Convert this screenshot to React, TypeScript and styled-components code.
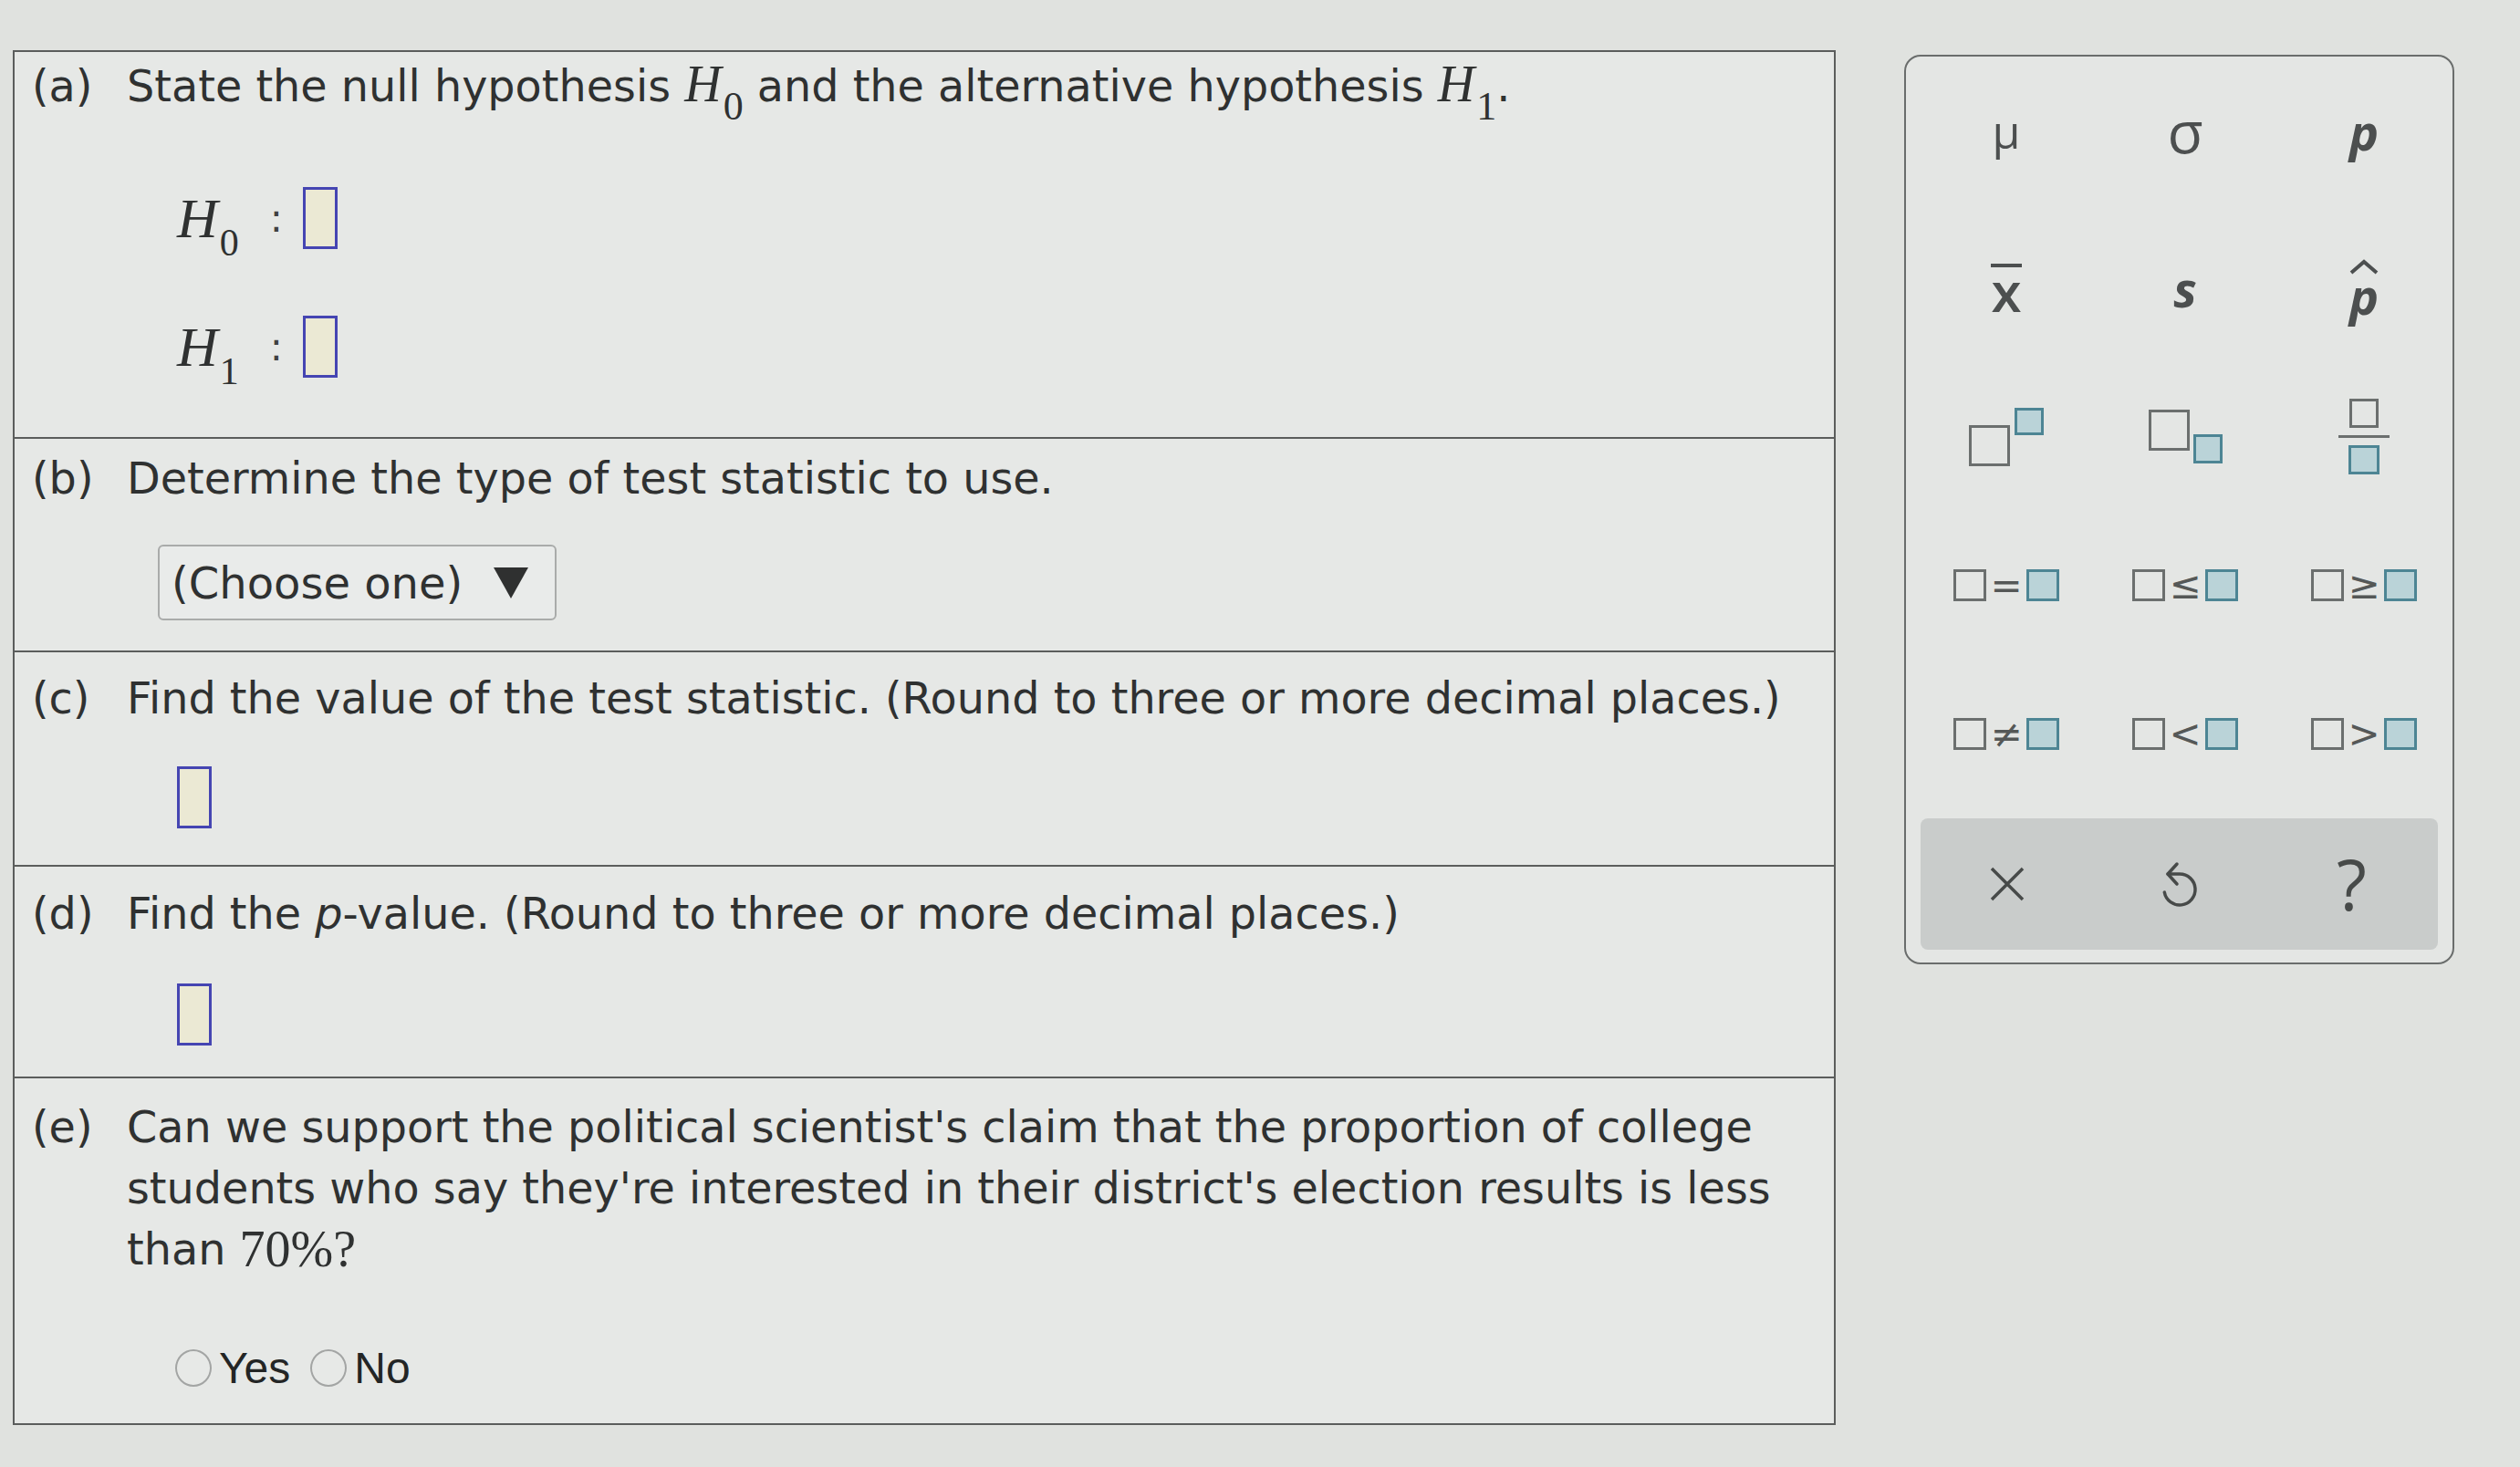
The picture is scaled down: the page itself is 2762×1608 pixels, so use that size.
import styled, { createGlobalStyle } from "styled-components";

const GlobalStyle = createGlobalStyle`
  html, body {
    margin: 0;
    padding: 0;
  }
  body {
    background: #e0e2df;
    font-family: "DejaVu Sans", Verdana, sans-serif;
    color: #2f3131;
  }
`;

const Page = styled.div`
  display: flex;
  align-items: flex-start;
  width: 2762px;
  height: 1608px;
  padding: 55px 0 0 14px;
  box-sizing: border-box;
  overflow: hidden;
`;

const QuestionTable = styled.div`
  width: 1998px;
  border: 2px solid #5b5d5c;
  background: #e6e8e6;
  box-sizing: border-box;
`;

const Part = styled.section<{ $h: number; $pt: number }>`
  display: flex;
  height: ${(p) => p.$h}px;
  padding: ${(p) => p.$pt}px 20px 0 19px;
  box-sizing: border-box;

  & + & {
    border-top: 2px solid #5b5d5c;
  }
`;

const Label = styled.div`
  flex: none;
  width: 104px;
  font-size: 47.7px;
  line-height: 67px;
`;

const Body = styled.div`
  flex: 1;
  min-width: 0;
`;

const Prompt = styled.p<{ $wrap?: number }>`
  margin: 0;
  font-size: 47.7px;
  line-height: 67px;
  max-width: ${(p) => (p.$wrap ? `${p.$wrap}px` : "none")};
`;

const MathVar = styled.span<{ $size: number }>`
  font-family: "Liberation Serif", "Times New Roman", serif;
  font-style: italic;
  font-size: ${(p) => p.$size}px;
  line-height: 1;
  white-space: nowrap;
`;

const Percent = styled.span`
  display: inline-block;
  font-family: "Liberation Serif", "Times New Roman", serif;
  font-size: 56px;
  line-height: 67px;
  vertical-align: top;
`;

const Sub = styled.span<{ $size: number; $drop: number }>`
  font-style: normal;
  font-size: ${(p) => p.$size}px;
  position: relative;
  top: ${(p) => p.$drop}px;
  margin-left: 2px;
`;

const HypList = styled.div`
  display: flex;
  flex-direction: column;
  gap: 71px;
  margin: 76px 0 0 55px;
`;

const HypRow = styled.div`
  display: flex;
  align-items: center;
  height: 70px;
`;

const Colon = styled.span`
  font-size: 42px;
  margin: 0 22px 0 34px;
  color: #3f4141;
`;

const AnswerBox = styled.span<{ $mt?: number; $ml?: number }>`
  display: block;
  width: 38px;
  height: 68px;
  margin: ${(p) => p.$mt ?? 0}px 0 0 ${(p) => p.$ml ?? 0}px;
  border: 3px solid #4545b2;
  background: #ebe9d4;
  box-sizing: border-box;
`;

const Select = styled.div`
  display: inline-flex;
  align-items: center;
  gap: 34px;
  width: 437px;
  height: 83px;
  margin: 39px 0 0 34px;
  padding-left: 13px;
  border: 2px solid #a9abaa;
  border-radius: 6px;
  background: #e9ebea;
  box-sizing: border-box;
  font-size: 48px;
  color: #2f3131;
`;

const Caret = styled.span`
  width: 0;
  height: 0;
  border-left: 19px solid transparent;
  border-right: 19px solid transparent;
  border-top: 34px solid #2f3030;
`;

const RadioGroup = styled.div`
  display: flex;
  align-items: center;
  height: 50px;
  margin: 71px 0 0 53px;
  font-family: "Liberation Sans", Arial, sans-serif;
  font-size: 48px;
  color: #232525;
`;

const RadioOption = styled.label`
  display: flex;
  align-items: center;
  gap: 8px;
  margin-right: 22px;
`;

const RadioDot = styled.span`
  width: 40px;
  height: 41px;
  border-radius: 50%;
  border: 2px solid #a3a5a4;
  background: #e7e9e7;
  box-sizing: border-box;
`;

/* keypad */

const Keypad = styled.aside`
  display: flex;
  flex-direction: column;
  width: 603px;
  height: 997px;
  margin: 5px 0 0 75px;
  padding: 9px 16px 0;
  border: 2px solid #6a6d6c;
  border-radius: 18px;
  background: #e4e6e4;
  box-sizing: border-box;
`;

const KeyGrid = styled.div`
  display: grid;
  grid-template-columns: repeat(3, 196px);
  grid-auto-rows: 163px;
  margin-left: -4px;
`;

const Key = styled.div<{ $italic?: boolean; $size?: number; $lift?: number }>`
  display: flex;
  align-items: center;
  justify-content: center;
  padding-bottom: ${(p) => (p.$lift ?? 0) * 2}px;
  font-family: "Open Sans", "DejaVu Sans", sans-serif;
  font-size: ${(p) => p.$size ?? 50}px;
  font-style: ${(p) => (p.$italic ? "italic" : "normal")};
  font-weight: ${(p) => (p.$italic ? 700 : 500)};
  color: #4c4f4f;
`;

const Bar = styled.span`
  display: inline-block;
  border-top: 4px solid #4c4f4f;
  font-size: 60px;
  font-weight: 600;
  line-height: 0.8;
  padding-top: 2px;
`;

const Hatted = styled.span`
  display: inline-flex;
  flex-direction: column;
  align-items: center;
  gap: 2px;
  font-size: 54px;
  line-height: 0.8;
`;

const Slot = styled.span<{ $w: number; $h: number; $filled?: boolean; $mt?: number }>`
  display: block;
  width: ${(p) => p.$w}px;
  height: ${(p) => p.$h}px;
  margin-top: ${(p) => p.$mt ?? 0}px;
  border: 3px solid ${(p) => (p.$filled ? "#4d8594" : "#6b6f6e")};
  background: ${(p) => (p.$filled ? "#bad3d8" : "transparent")};
  box-sizing: border-box;
`;

const Pair = styled.span<{ $gap: number }>`
  display: flex;
  align-items: flex-start;
  gap: ${(p) => p.$gap}px;
`;

const Fraction = styled.span`
  display: flex;
  flex-direction: column;
  align-items: center;
  gap: 8px;
`;

const FracLine = styled.span`
  width: 56px;
  height: 3px;
  background: #6b6f6e;
`;

const Relation = styled.span`
  display: flex;
  align-items: center;
  gap: 4px;
`;

const RelSign = styled.span`
  font-family: "DejaVu Sans", sans-serif;
  font-size: 42px;
  line-height: 1;
  color: #555857;
`;

const ActionBar = styled.div`
  display: grid;
  grid-template-columns: repeat(3, 1fr);
  align-items: center;
  height: 144px;
  margin-top: 11px;
  border-radius: 8px;
  background: #c9cccb;
`;

const Action = styled.div`
  display: flex;
  justify-content: center;
  align-items: center;
  color: #474a49;
`;

const Help = styled.span`
  font-family: "Open Sans", sans-serif;
  font-weight: 400;
  font-size: 76px;
  line-height: 1;
`;

const Rel = ({ sign }: { sign: string }) => (
  <Relation>
    <Slot $w={36} $h={35} />
    <RelSign>{sign}</RelSign>
    <Slot $w={36} $h={35} $filled />
  </Relation>
);

const H = ({ n, size, sub, drop }: { n: string; size: number; sub: number; drop: number }) => (
  <MathVar $size={size}>
    H<Sub $size={sub} $drop={drop}>{n}</Sub>
  </MathVar>
);

export default function App() {
  return (
    <>
      <GlobalStyle />
      <Page>
        <QuestionTable>
          <Part $h={422} $pt={4}>
            <Label>(a)</Label>
            <Body>
              <Prompt>
                State the null hypothesis <H n="0" size={56} sub={44} drop={20} /> and the alternative
                hypothesis <H n="1" size={56} sub={44} drop={20} />.
              </Prompt>
              <HypList>
                <HypRow>
                  <H n="0" size={62} sub={42} drop={20} />
                  <Colon>:</Colon>
                  <AnswerBox />
                </HypRow>
                <HypRow>
                  <H n="1" size={62} sub={42} drop={20} />
                  <Colon>:</Colon>
                  <AnswerBox />
                </HypRow>
              </HypList>
            </Body>
          </Part>

          <Part $h={234} $pt={10}>
            <Label>(b)</Label>
            <Body>
              <Prompt>Determine the type of test statistic to use.</Prompt>
              <Select>
                (Choose one)
                <Caret />
              </Select>
            </Body>
          </Part>

          <Part $h={235} $pt={17}>
            <Label>(c)</Label>
            <Body>
              <Prompt>Find the value of the test statistic. (Round to three or more decimal places.)</Prompt>
              <AnswerBox $mt={41} $ml={55} />
            </Body>
          </Part>

          <Part $h={232} $pt={18}>
            <Label>(d)</Label>
            <Body>
              <Prompt>
                Find the <i>p</i>-value. (Round to three or more decimal places.)
              </Prompt>
              <AnswerBox $mt={43} $ml={55} />
            </Body>
          </Part>

          <Part $h={380} $pt={20}>
            <Label>(e)</Label>
            <Body>
              <Prompt $wrap={1820}>
                Can we support the political scientist's claim that the proportion of college students who say
                they're interested in their district's election results is less than{" "}
                <Percent>70%?</Percent>
              </Prompt>
              <RadioGroup>
                <RadioOption>
                  <RadioDot />
                  Yes
                </RadioOption>
                <RadioOption>
                  <RadioDot />
                  No
                </RadioOption>
              </RadioGroup>
            </Body>
          </Part>
        </QuestionTable>

        <Keypad>
          <KeyGrid>
            <Key $lift={9}>μ</Key>
            <Key $size={64} $lift={9}>
              σ
            </Key>
            <Key $italic $size={54} $lift={9}>
              p
            </Key>

            <Key>
              <Bar>x</Bar>
            </Key>
            <Key $italic $size={54}>
              s
            </Key>
            <Key $italic>
              <Hatted>
                <svg width="34" height="17" viewBox="0 0 34 17" fill="none" stroke="#4c4f4f" strokeWidth="4">
                  <path d="M3 15 L17 3 L31 15" />
                </svg>
                p
              </Hatted>
            </Key>

            <Key>
              <Pair $gap={5}>
                <Slot $w={45} $h={45} $mt={19} />
                <Slot $w={32} $h={30} $filled />
              </Pair>
            </Key>
            <Key>
              <Pair $gap={4}>
                <Slot $w={45} $h={45} />
                <Slot $w={32} $h={32} $mt={27} $filled />
              </Pair>
            </Key>
            <Key>
              <Fraction>
                <Slot $w={32} $h={32} />
                <FracLine />
                <Slot $w={34} $h={32} $filled />
              </Fraction>
            </Key>

            <Key>
              <Rel sign="=" />
            </Key>
            <Key>
              <Rel sign="≤" />
            </Key>
            <Key>
              <Rel sign="≥" />
            </Key>

            <Key>
              <Rel sign="≠" />
            </Key>
            <Key>
              <Rel sign="<" />
            </Key>
            <Key>
              <Rel sign=">" />
            </Key>
          </KeyGrid>

          <ActionBar>
            <Action>
              <svg width="40" height="40" viewBox="0 0 40 40" fill="none" stroke="currentColor" strokeWidth="3.5">
                <path d="M3 3 L37 37 M37 3 L3 37" />
              </svg>
            </Action>
            <Action>
              <svg width="44" height="54" viewBox="0 0 44 54" fill="none" stroke="currentColor" strokeWidth="3.5" strokeLinecap="round" strokeLinejoin="round">
                <path d="M5.3 36 A17 17 0 1 0 22 16 H9" />
                <path d="M19 5 L9 16 L19 27" />
              </svg>
            </Action>
            <Action>
              <Help>?</Help>
            </Action>
          </ActionBar>
        </Keypad>
      </Page>
    </>
  );
}
